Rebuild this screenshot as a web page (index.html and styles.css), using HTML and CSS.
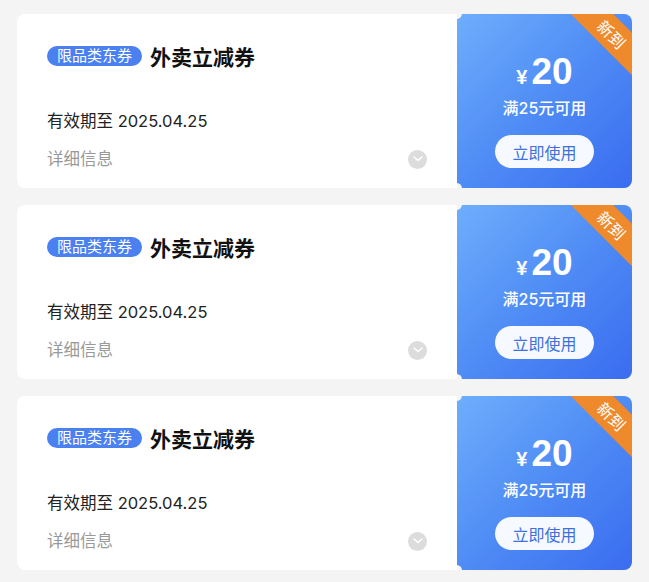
FILE: index.html
```html
<!DOCTYPE html>
<html lang="zh-CN">
<head>
  <meta charset="UTF-8" />
  <title>外卖立减券</title>
  <meta name="viewport" content="width=device-width, initial-scale=1" />
  <link rel="stylesheet" href="styles.css">
</head>
<body>
  <div class="coupon-list">

    <div class="coupon">
      <div class="coupon-main">
        <div class="coupon-head">
          <span class="tag">限品类东券</span>
          <span class="title">外卖立减券</span>
        </div>
        <div class="expire">有效期至 2025.04.25</div>
        <div class="detail">
          <span>详细信息</span>
          <span class="arrow">
            <svg width="10" height="6" viewBox="0 0 10 6"><path d="M1 1l4 3.5L9 1" fill="none" stroke="#fff" stroke-width="1.6" stroke-linecap="round" stroke-linejoin="round"/></svg>
          </span>
        </div>
      </div>
      <div class="coupon-side">
        <div class="ribbon">新到</div>
        <div class="price"><span class="yen">¥</span>20</div>
        <div class="cond">满25元可用</div>
        <button class="use-btn">立即使用</button>
      </div>
    </div>

    <div class="coupon">
      <div class="coupon-main">
        <div class="coupon-head">
          <span class="tag">限品类东券</span>
          <span class="title">外卖立减券</span>
        </div>
        <div class="expire">有效期至 2025.04.25</div>
        <div class="detail">
          <span>详细信息</span>
          <span class="arrow">
            <svg width="10" height="6" viewBox="0 0 10 6"><path d="M1 1l4 3.5L9 1" fill="none" stroke="#fff" stroke-width="1.6" stroke-linecap="round" stroke-linejoin="round"/></svg>
          </span>
        </div>
      </div>
      <div class="coupon-side">
        <div class="ribbon">新到</div>
        <div class="price"><span class="yen">¥</span>20</div>
        <div class="cond">满25元可用</div>
        <button class="use-btn">立即使用</button>
      </div>
    </div>

    <div class="coupon">
      <div class="coupon-main">
        <div class="coupon-head">
          <span class="tag">限品类东券</span>
          <span class="title">外卖立减券</span>
        </div>
        <div class="expire">有效期至 2025.04.25</div>
        <div class="detail">
          <span>详细信息</span>
          <span class="arrow">
            <svg width="10" height="6" viewBox="0 0 10 6"><path d="M1 1l4 3.5L9 1" fill="none" stroke="#fff" stroke-width="1.6" stroke-linecap="round" stroke-linejoin="round"/></svg>
          </span>
        </div>
      </div>
      <div class="coupon-side">
        <div class="ribbon">新到</div>
        <div class="price"><span class="yen">¥</span>20</div>
        <div class="cond">满25元可用</div>
        <button class="use-btn">立即使用</button>
      </div>
    </div>

  </div>
</body>
</html>
```

FILE: styles.css
```css
body {
  margin: 0;
  background-color: #f4f4f4;
  font-family: Inter, "Noto Sans CJK SC", sans-serif;
  color: #1d1d1f;
}

.coupon-list {
  display: flex;
  flex-direction: column;
  gap: 17px;
  padding: 14px 17px;
}

.coupon {
  display: flex;
  height: 174px;
}

.coupon-main {
  width: 440px;
  box-sizing: border-box;
  background-color: #fff;
  border-radius: 8px 0 0 8px;
  padding: 28px 30px 0 30px;
  display: flex;
  flex-direction: column;
}

.coupon-head {
  display: flex;
  align-items: center;
  height: 28px;
}

.tag {
  display: inline-block;
  height: 20px;
  line-height: 20px;
  padding: 0 10px;
  border-radius: 10px;
  background-color: #4a80ef;
  color: #fff;
  font-size: 15px;
}

.title {
  margin-left: 8px;
  font-size: 21px;
  font-weight: bold;
  color: #111;
}

.expire {
  margin-top: 39px;
  font-size: 16.5px;
  line-height: 24px;
  color: #222;
}

.detail {
  margin-top: 14px;
  display: flex;
  justify-content: space-between;
  align-items: center;
  font-size: 16.5px;
  line-height: 24px;
  color: #999;
}

.arrow {
  width: 19px;
  height: 19px;
  border-radius: 50%;
  background-color: #dcdcdc;
  display: flex;
  align-items: center;
  justify-content: center;
}

.coupon-side {
  position: relative;
  width: 175px;
  overflow: hidden;
  border-radius: 0 8px 8px 0;
  background: linear-gradient(135deg, #6eaefc 0%, #4f8cf5 50%, #3a6cf0 100%);
  display: flex;
  flex-direction: column;
  align-items: center;
  padding-top: 40px;
  box-sizing: border-box;
  color: #fff;
}

.coupon-side::before,
.coupon-side::after {
  content: "";
  position: absolute;
  left: -6px;
  width: 11px;
  height: 11px;
  border-radius: 50%;
  background-color: #f4f4f4;
}

.coupon-side::before {
  top: -6px;
}

.coupon-side::after {
  bottom: -6px;
}

.ribbon {
  position: absolute;
  left: 103px;
  top: 5px;
  width: 104px;
  height: 30px;
  line-height: 30px;
  text-align: center;
  background-color: #ef8a2c;
  color: #fff;
  font-family: "Noto Sans CJK SC", sans-serif;
  font-size: 16px;
  transform: rotate(45deg);
}

.price {
  font-family: "Liberation Sans", Arial, sans-serif;
  font-size: 37px;
  font-weight: bold;
  line-height: 36px;
  height: 36px;
}

.yen {
  font-size: 20px;
  line-height: 1;
  margin-right: 4px;
}

.cond {
  margin-top: 7px;
  font-size: 16px;
  line-height: 22px;
  font-weight: 500;
}

.use-btn {
  margin-top: 16px;
  width: 99px;
  height: 33px;
  border: none;
  border-radius: 17px;
  background-color: #f6f9ff;
  color: #4070dd;
  font-family: "Noto Sans CJK SC", sans-serif;
  font-size: 16px;
  padding: 0;
  cursor: pointer;
}
```
